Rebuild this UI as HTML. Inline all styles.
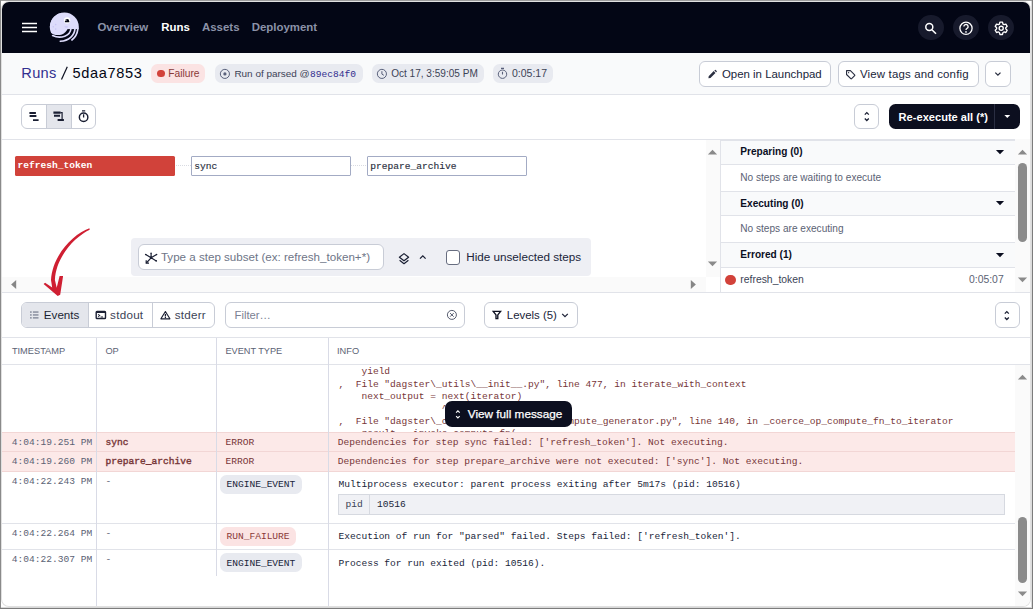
<!DOCTYPE html>
<html>
<head>
<meta charset="utf-8">
<title>Run 5daa7853</title>
<style>
*{box-sizing:border-box;margin:0;padding:0}
html,body{width:1033px;height:609px;overflow:hidden;background:#fff}
body{font-family:"Liberation Sans",sans-serif;position:relative}
.t{position:absolute;white-space:pre;line-height:1;font-family:"Liberation Sans",sans-serif}
.m{font-family:"Liberation Mono",monospace}
#frame{position:absolute;left:0;top:0;width:1033px;height:609px;background:#fff}
#app{position:absolute;left:2px;top:2px;width:1028px;height:604px;border-radius:7px;overflow:hidden;background:#fff;box-shadow:0 0 0 1px #e0e0e0}
#pg{position:absolute;left:-2px;top:-2px;width:1033px;height:609px}
</style>
</head>
<body>
<div id="frame">
<div style="position:absolute;left:0;top:0;width:1033px;height:1px;background:#9c9c9c"></div>
<div style="position:absolute;left:0;top:0;width:1px;height:609px;background:#8a8a8a"></div>
<div style="position:absolute;left:1032px;top:0;width:1px;height:609px;background:#7c7c7c"></div>
<div style="position:absolute;left:1031px;top:1px;width:1px;height:607px;background:#dcdcdc"></div>
<div style="position:absolute;left:0;top:608px;width:1033px;height:1px;background:#7c7c7c"></div>
<div style="position:absolute;left:1px;top:607px;width:1031px;height:1px;background:#d8d8d8"></div>
</div>
<div id="app"><div id="pg">
<div style="position:absolute;left:0px;top:0px;width:1033.00px;height:53.00px;background:#030615"></div>
<svg style="position:absolute;left:20px;top:20px;" width="20" height="16" viewBox="0 0 20 16"><path d="M2 3.55h15M2 7.55h15M2 11.6h15" stroke="#fff" stroke-width="1.5" fill="none"/></svg>
<svg style="position:absolute;left:44px;top:6px" width="48" height="42" viewBox="0 0 48 42">
<defs><clipPath id="oc"><circle cx="20.35" cy="21.05" r="14.5"/></clipPath></defs>
<g clip-path="url(#oc)">
<rect x="0" y="0" width="48" height="23.1" fill="#dddcfb"/>
<circle cx="13.8" cy="18.2" r="10.9" fill="#dddcfb"/>
</g>
<g fill="none" stroke="#dddcfb" stroke-width="1.65" stroke-linecap="round">
<path d="M26.9 22.8 C26.5 29.5 17 33.5 8.6 29.6"/>
<path d="M31 22.8 C30.3 29.5 25 34.6 16.3 35.3"/>
<path d="M33.9 22.8 Q33 30 27.9 34"/>
</g>
<circle cx="23.1" cy="14.4" r="3.15" fill="#fff"/>
<path d="M21 16.3 L21 15.2 A2.1 2.1 0 0 1 25.2 15.2 L25.2 16.3 Z" fill="#030615"/>
<circle cx="21.9" cy="14.2" r="0.6" fill="#fff"/>
<circle cx="11.7" cy="18.6" r="0.8" fill="#c9c6f6"/><circle cx="9.3" cy="20.7" r="0.8" fill="#c9c6f6"/><circle cx="11.7" cy="23.1" r="0.8" fill="#c9c6f6"/>
<ellipse cx="22.2" cy="20.8" rx="1.9" ry="1.1" fill="#cfcdf8"/>
</svg>
<div class="t" style="left:97.40px;top:22px;font-size:11.45px;color:#8b92a8;font-weight:bold;">Overview</div>
<div class="t" style="left:161.30px;top:22px;font-size:11.45px;color:#fff;font-weight:bold;">Runs</div>
<div class="t" style="left:202.00px;top:22px;font-size:11.45px;color:#8b92a8;font-weight:bold;">Assets</div>
<div class="t" style="left:251.70px;top:22px;font-size:11.45px;color:#8b92a8;font-weight:bold;">Deployment</div>
<div style="position:absolute;left:918.1px;top:14.6px;width:25.80px;height:25.80px;border-radius:50%;background:#171a2c"></div>
<div style="position:absolute;left:953.2px;top:14.6px;width:25.80px;height:25.80px;border-radius:50%;background:#171a2c"></div>
<div style="position:absolute;left:988.3000000000001px;top:14.6px;width:25.80px;height:25.80px;border-radius:50%;background:#171a2c"></div>
<svg style="position:absolute;left:921px;top:17.5px;" width="20" height="20" viewBox="0 0 20 20"><circle cx="8.3" cy="9.1" r="3.5" fill="none" stroke="#fff" stroke-width="1.5"/><path d="M10.9 11.7 L15 15.7" stroke="#fff" stroke-width="1.6" stroke-linecap="butt"/></svg>
<svg style="position:absolute;left:956px;top:17.5px;" width="20" height="20" viewBox="0 0 20 20"><circle cx="10" cy="10.3" r="6.1" fill="none" stroke="#fff" stroke-width="1.3"/><path d="M7.9 8.6 a2.1 2.1 0 1 1 3.3 1.7 c-.8 .55 -1.2 .9 -1.2 1.8" fill="none" stroke="#fff" stroke-width="1.35"/><circle cx="10" cy="13.9" r=".85" fill="#fff"/></svg>
<svg style="position:absolute;left:991px;top:17.5px;" width="20" height="20" viewBox="0 0 20 20"><path d="M8.89,4.14 L11.51,4.14 L11.99,6.06 L12.97,6.63 L14.88,6.08 L16.19,8.36 L14.76,9.73 L14.76,10.87 L16.19,12.24 L14.88,14.52 L12.97,13.97 L11.99,14.54 L11.51,16.46 L8.89,16.46 L8.41,14.54 L7.43,13.97 L5.52,14.52 L4.21,12.24 L5.64,10.87 L5.64,9.73 L4.21,8.36 L5.52,6.08 L7.43,6.63 L8.41,6.06Z" fill="none" stroke="#fff" stroke-width="1.35" stroke-linejoin="round"/><circle cx="10.2" cy="10.3" r="2.05" fill="none" stroke="#fff" stroke-width="1.35"/></svg>
<div style="position:absolute;left:0px;top:53px;width:1033.00px;height:41.00px;background:#f9fafb"></div>
<div style="position:absolute;left:0px;top:94px;width:1033.00px;height:1.00px;background:#e1e3e9"></div>
<div class="t" style="left:21.30px;top:66px;font-size:14.6px;color:#322f90;letter-spacing:0.33px;">Runs</div>
<svg style="position:absolute;left:59px;top:64px;" width="12" height="18" viewBox="0 0 12 18"><path d="M2.5 15.4 L8.3 2.7" stroke="#0b0e1f" stroke-width="1.2"/></svg>
<div class="t" style="left:72.50px;top:66px;font-size:14.6px;color:#030615;letter-spacing:0.64px;">5daa7853</div>
<div style="position:absolute;left:151px;top:64px;width:54.00px;height:19.00px;border-radius:6.5px;background:#fbe3e3"></div>
<div style="position:absolute;left:157.2px;top:69.8px;width:7.60px;height:7.60px;border-radius:50%;background:#d2423a"></div>
<div class="t" style="left:168.20px;top:69px;font-size:10.25px;color:#8a3a38;">Failure</div>
<div style="position:absolute;left:215px;top:64px;width:148.00px;height:19.00px;border-radius:6.5px;background:#e8eaf0"></div>
<svg style="position:absolute;left:218.5px;top:67.5px;" width="12" height="12" viewBox="0 0 12 12"><circle cx="5.9" cy="5.9" r="4.55" fill="none" stroke="#59607a" stroke-width="1"/><circle cx="5.9" cy="5.9" r="1.6" fill="#59607a"/></svg>
<div class="t" style="left:234.40px;top:69px;font-size:9.95px;color:#3c4356;">Run of parsed @</div>
<div class="t m" style="left:310.10px;top:70px;font-size:9.58px;color:#302d8e;">89ec84f0</div>
<div style="position:absolute;left:372px;top:64px;width:112.00px;height:19.00px;border-radius:6.5px;background:#e8eaf0"></div>
<svg style="position:absolute;left:375.5px;top:67.5px;" width="12" height="12" viewBox="0 0 12 12"><circle cx="5.9" cy="5.9" r="4.55" fill="none" stroke="#59607a" stroke-width="1"/><path d="M5.9 3.2v2.9l2 1.2" fill="none" stroke="#59607a" stroke-width="1"/></svg>
<div class="t" style="left:391.20px;top:69px;font-size:10.05px;color:#3c4356;">Oct 17, 3:59:05 PM</div>
<div style="position:absolute;left:493px;top:64px;width:60.00px;height:19.00px;border-radius:6.5px;background:#e8eaf0"></div>
<svg style="position:absolute;left:497px;top:67px;" width="11" height="13" viewBox="0 0 11 13"><circle cx="5.5" cy="7.2" r="4.2" fill="none" stroke="#59607a" stroke-width="1"/><path d="M4 1.4h3M5.5 4.8v2.6" fill="none" stroke="#59607a" stroke-width="1.1"/></svg>
<div class="t" style="left:512.00px;top:68px;font-size:10.5px;color:#3c4356;">0:05:17</div>
<div style="position:absolute;left:699px;top:61px;width:132.00px;height:26.00px;border:1px solid #c8ccd6;border-radius:6px;background:#fff"></div>
<svg style="position:absolute;left:706.6px;top:69.2px;" width="10.6" height="10.6" viewBox="0 0 12 12"><path d="M1.6 10.4 L1.9 8.1 L7.6 2.4 L9.6 4.4 L3.9 10.1 Z M8.3 1.7 l.7-.7 a.6 .6 0 0 1 .85 0 l1.15 1.15 a.6 .6 0 0 1 0 .85 l-.7 .7z" fill="#2b3042"/></svg>
<div class="t" style="left:721.90px;top:69px;font-size:11.45px;color:#20253a;">Open in Launchpad</div>
<div style="position:absolute;left:838px;top:61px;width:140.50px;height:26.00px;border:1px solid #c8ccd6;border-radius:6px;background:#fff"></div>
<svg style="position:absolute;left:844.8px;top:68.8px;" width="11.2" height="11.2" viewBox="0 0 13 13"><path d="M1.8 1.9 h4.5 l4.9 4.9 a.7 .7 0 0 1 0 1 l-3.5 3.5 a.7 .7 0 0 1 -1 0 L1.8 6.4 Z" fill="none" stroke="#2b3042" stroke-width="1.3" stroke-linejoin="round"/><circle cx="4.2" cy="4.3" r=".75" fill="#2b3042"/></svg>
<div class="t" style="left:860.00px;top:69px;font-size:11.45px;color:#20253a;letter-spacing:0.17px;">View tags and config</div>
<div style="position:absolute;left:985px;top:61px;width:26.00px;height:26.00px;border:1px solid #c8ccd6;border-radius:6px;background:#fff"></div>
<svg style="position:absolute;left:993px;top:70px;" width="10" height="8" viewBox="0 0 10 8"><path d="M2.3 2.6 L4.9 5.2 L7.5 2.6" fill="none" stroke="#2b3042" stroke-width="1.3"/></svg>
<div style="position:absolute;left:0px;top:95px;width:1033.00px;height:44.00px;background:#fff"></div>
<div style="position:absolute;left:0px;top:139px;width:1015.00px;height:1.00px;background:#e1e3e9"></div>
<div style="position:absolute;left:21px;top:104px;width:74.50px;height:25.00px;border:1px solid #c8ccd6;border-radius:6px;background:#fff;overflow:hidden"><div style="position:absolute;left:24px;top:0;width:25.5px;height:24px;background:#e4e6ec;border-left:1px solid #c8ccd6;border-right:1px solid #c8ccd6"></div></div>
<svg style="position:absolute;left:28px;top:110px;" width="12" height="13" viewBox="0 0 12 13"><path d="M1.4 2h6.5v1.9H1.4z M1.6 5.1h6.8v2H1.6z M5 9.2h5.6v1.9H5z" fill="#1a1f33"/></svg>
<svg style="position:absolute;left:52px;top:110px;" width="13" height="13" viewBox="0 0 13 13"><path d="M1.4 1.6h7.2v2.1H1.4z M2 4.7h6v2.1H2z M5.6 9h6.3v2H5.6z" fill="#1a1f33"/><path d="M8.4 2.7h1.7v6.6" fill="none" stroke="#1a1f33" stroke-width="1.2"/></svg>
<svg style="position:absolute;left:77px;top:109px;" width="13" height="15" viewBox="0 0 13 15"><circle cx="6.6" cy="8.2" r="4.25" fill="none" stroke="#1a1f33" stroke-width="1.45"/><path d="M5 1.9h3.2" stroke="#1a1f33" stroke-width="1.4"/><path d="M6.6 5.3v3.1" stroke="#1a1f33" stroke-width="1.3"/></svg>
<div style="position:absolute;left:854px;top:104px;width:24.50px;height:25.00px;border:1px solid #c8ccd6;border-radius:6px;background:#fff"></div>
<svg style="position:absolute;left:861.6px;top:109px;" width="10" height="15" viewBox="0 0 10 15"><path d="M2.8 5.6 L4.8 3.6 L6.8 5.6 M2.8 9.5 L4.8 11.5 L6.8 9.5" fill="none" stroke="#1a1f33" stroke-width="1.3"/></svg>
<div style="position:absolute;left:889px;top:104px;width:131.30px;height:25.00px;border-radius:6.5px;background:#0c0f1f"></div>
<div style="position:absolute;left:994.3px;top:104px;width:0.80px;height:25.00px;background:#2a2e42"></div>
<div class="t" style="left:898.60px;top:112px;font-size:11.1px;color:#fff;font-weight:bold;">Re-execute all (*)</div>
<svg style="position:absolute;left:1003px;top:114px;" width="9" height="5" viewBox="0 0 9 5"><path d="M1.4 1h5.8L4.3 4z" fill="#fff"/></svg>
<div style="position:absolute;left:15px;top:156px;width:160.20px;height:19.60px;background:#d1423a;border-radius:1.5px"></div>
<div class="t m" style="left:17.60px;top:161px;font-size:9.58px;color:#fff;font-weight:bold;">refresh_token</div>
<div style="position:absolute;left:191px;top:156px;width:160.00px;height:19.60px;border:1px solid #a3abc4;background:#fff;border-radius:1px"></div>
<div class="t m" style="left:194.20px;top:162px;font-size:9.58px;color:#2a2f40;-webkit-text-stroke:.15px #2a2f40;">sync</div>
<div style="position:absolute;left:367px;top:156px;width:159.80px;height:19.60px;border:1px solid #a3abc4;background:#fff;border-radius:1px"></div>
<div class="t m" style="left:370.20px;top:162px;font-size:9.58px;color:#2a2f40;-webkit-text-stroke:.15px #2a2f40;">prepare_archive</div>
<div style="position:absolute;left:175.5px;top:165px;width:15.50px;height:1.00px;background:repeating-linear-gradient(90deg,#d9dbe2 0 1px,transparent 1px 2px)"></div>
<div style="position:absolute;left:351.3px;top:165px;width:15.70px;height:1.00px;background:repeating-linear-gradient(90deg,#d9dbe2 0 1px,transparent 1px 2px)"></div>
<div style="position:absolute;left:131px;top:238px;width:460.00px;height:37.50px;background:#eeeff4;border-radius:4px"></div>
<div style="position:absolute;left:138.4px;top:244px;width:245.40px;height:26.00px;border:1px solid #c8ccd6;border-radius:6px;background:#fff"></div>
<svg style="position:absolute;left:143.5px;top:251.5px;" width="14" height="13" viewBox="0 0 14 13"><g stroke="#1a1f33" stroke-width="1.2" fill="none"><path d="M7.1 5.8V1.2 M7.1 5.8 L1.7 2.5 M7.1 5.8 L12.6 2.5 M7.1 5.8 L12.3 8.9 M7.1 5.8 L2.3 11"/><path d="M2.2 8.3v2.8h2.8"/></g><circle cx="7.1" cy="5.8" r="1.2" fill="#1a1f33"/><g fill="#1a1f33"><circle cx="7.1" cy="1.2" r=".8"/><circle cx="1.7" cy="2.5" r=".8"/><circle cx="12.6" cy="2.5" r=".8"/><circle cx="12.3" cy="8.9" r=".8"/></g></svg>
<div class="t" style="left:160.90px;top:251px;font-size:11.6px;color:#6e7587;">Type a step subset (ex: refresh_token+*)</div>
<svg style="position:absolute;left:397.5px;top:251.5px;" width="12" height="13" viewBox="0 0 12 13"><path d="M6 1.6 L10.6 5.2 L6 8.8 L1.4 5.2 Z" fill="none" stroke="#1a1f33" stroke-width="1.2" stroke-linejoin="round"/><path d="M1.6 8.3 L6 11.7 L10.4 8.3" fill="none" stroke="#1a1f33" stroke-width="1.2" stroke-linejoin="round"/></svg>
<svg style="position:absolute;left:418px;top:253px;" width="10" height="8" viewBox="0 0 10 8"><path d="M2 5.6 L4.8 2.8 L7.6 5.6" fill="none" stroke="#1a1f33" stroke-width="1.3"/></svg>
<div style="position:absolute;left:445.6px;top:250.3px;width:14.60px;height:14.50px;border:1.4px solid #676d80;border-radius:3px;background:#fff"></div>
<div class="t" style="left:466.20px;top:251px;font-size:11.7px;color:#20253a;">Hide unselected steps</div>
<div style="position:absolute;left:0px;top:277px;width:706.00px;height:15.00px;background:#fafafa"></div>
<svg style="position:absolute;left:10px;top:279px;" width="8" height="11" viewBox="0 0 8 11"><path d="M6.2 .9v9.2L1.1 5.5z" fill="#868686"/></svg>
<svg style="position:absolute;left:689px;top:279px;" width="8" height="11" viewBox="0 0 8 11"><path d="M1.8 .9v9.2L6.9 5.5z" fill="#868686"/></svg>
<div style="position:absolute;left:705.5px;top:140px;width:15.00px;height:137.00px;background:#fafafa"></div>
<svg style="position:absolute;left:707px;top:148px;" width="11" height="8" viewBox="0 0 11 8"><path d="M.9 6.4h9.2L5.5 1.7z" fill="#8a8a8a"/></svg>
<svg style="position:absolute;left:707px;top:260px;" width="11" height="8" viewBox="0 0 11 8"><path d="M.9 1.5h9.2L5.5 6.2z" fill="#8a8a8a"/></svg>
<div style="position:absolute;left:0px;top:292px;width:1033.00px;height:1.00px;background:#e1e3e9"></div>
<div style="position:absolute;left:720px;top:140px;width:1.00px;height:152.00px;background:#e1e3e9"></div>
<div style="position:absolute;left:721px;top:140px;width:294.00px;height:24.30px;background:#f9fafb"></div>
<div style="position:absolute;left:721px;top:140px;width:294.00px;height:1.00px;background:#e1e3e9"></div>
<div style="position:absolute;left:721px;top:163.8px;width:294.00px;height:1.00px;background:#e1e3e9"></div>
<div class="t" style="left:740.30px;top:147px;font-size:10.1px;color:#0b0e1f;font-weight:bold;">Preparing (0)</div>
<svg style="position:absolute;left:995px;top:149.25px;" width="10" height="6" viewBox="0 0 10 6"><path d="M.9 1h8.2L5 5.2z" fill="#0b0e1f"/></svg>
<div class="t" style="left:740.30px;top:173px;font-size:10.1px;color:#5b6274;">No steps are waiting to execute</div>
<div style="position:absolute;left:721px;top:191px;width:294.00px;height:24.70px;background:#f9fafb"></div>
<div style="position:absolute;left:721px;top:191px;width:294.00px;height:1.00px;background:#e1e3e9"></div>
<div style="position:absolute;left:721px;top:215.2px;width:294.00px;height:1.00px;background:#e1e3e9"></div>
<div class="t" style="left:740.30px;top:199px;font-size:10.1px;color:#0b0e1f;font-weight:bold;">Executing (0)</div>
<svg style="position:absolute;left:995px;top:200.45px;" width="10" height="6" viewBox="0 0 10 6"><path d="M.9 1h8.2L5 5.2z" fill="#0b0e1f"/></svg>
<div class="t" style="left:740.30px;top:224px;font-size:10.1px;color:#5b6274;">No steps are executing</div>
<div style="position:absolute;left:721px;top:242px;width:294.00px;height:25.50px;background:#f9fafb"></div>
<div style="position:absolute;left:721px;top:242px;width:294.00px;height:1.00px;background:#e1e3e9"></div>
<div style="position:absolute;left:721px;top:267.0px;width:294.00px;height:1.00px;background:#e1e3e9"></div>
<div class="t" style="left:740.30px;top:250px;font-size:10.1px;color:#0b0e1f;font-weight:bold;">Errored (1)</div>
<svg style="position:absolute;left:995px;top:251.85px;" width="10" height="6" viewBox="0 0 10 6"><path d="M.9 1h8.2L5 5.2z" fill="#0b0e1f"/></svg>
<div style="position:absolute;left:725.4px;top:274.8px;width:10.20px;height:10.20px;border-radius:50%;background:#d2423a"></div>
<div class="t" style="left:740.30px;top:275px;font-size:10.4px;color:#3c4356;">refresh_token</div>
<div class="t" style="left:969.00px;top:275px;font-size:10.4px;color:#5b6274;">0:05:07</div>
<div style="position:absolute;left:1015px;top:139px;width:16.00px;height:153.00px;background:#fafafa"></div>
<svg style="position:absolute;left:1017px;top:148px;" width="11" height="8" viewBox="0 0 11 8"><path d="M.9 6.4h9.2L5.5 1.7z" fill="#8a8a8a"/></svg>
<svg style="position:absolute;left:1017px;top:276px;" width="11" height="8" viewBox="0 0 11 8"><path d="M.9 1.5h9.2L5.5 6.2z" fill="#8a8a8a"/></svg>
<div style="position:absolute;left:1018px;top:163px;width:9.20px;height:79.30px;border-radius:4.6px;background:#8b8b8b"></div>
<svg style="position:absolute;left:0;top:0" width="1033" height="609" viewBox="0 0 1033 609"><path d="M89.4 228.3 C73.2 234.2 52.5 254.9 51 280 L52.2 287.4 L45.1 282.7 L43.6 284.1 L57.7 295.9 L60.2 294.8 L63.1 275.9 L59.6 275.9 L56.7 287.8 L54.9 280 C56 256.4 75.2 236.6 89.7 229.8 Z" fill="#cf1f32"/></svg>
<div style="position:absolute;left:21px;top:302px;width:194.00px;height:26.00px;border:1px solid #c8ccd6;border-radius:6px;background:#fff;overflow:hidden"><div style="position:absolute;left:-1px;top:-1px;width:68px;height:27px;background:#e4e6ec;border-right:1px solid #c8ccd6"></div><div style="position:absolute;left:130px;top:-1px;width:1px;height:27px;background:#c8ccd6"></div></div>
<svg style="position:absolute;left:29px;top:310px;" width="11" height="10" viewBox="0 0 11 10"><g fill="#8a90a0"><rect x="1" y="1.3" width="1.7" height="1.5"/><rect x="1" y="4.2" width="1.7" height="1.5"/><rect x="1" y="7.1" width="1.7" height="1.5"/><rect x="3.9" y="1.3" width="5.6" height="1.5"/><rect x="3.9" y="4.2" width="5.6" height="1.5"/><rect x="3.9" y="7.1" width="5.6" height="1.5"/></g></svg>
<div class="t" style="left:43.80px;top:309px;font-size:11.65px;color:#1a1f33;">Events</div>
<svg style="position:absolute;left:94.5px;top:310px;" width="12" height="10" viewBox="0 0 12 10"><rect x="1.2" y="1.5" width="9.3" height="7" rx=".8" fill="none" stroke="#1a1f33" stroke-width="1.4"/><rect x="1.2" y="1.5" width="9.3" height="1.5" fill="#1a1f33"/><path d="M3.1 4.3 L4.7 5.5 L3.1 6.7 M5.6 6.9h2.4" fill="none" stroke="#1a1f33" stroke-width="1.05"/></svg>
<div class="t" style="left:110.10px;top:309px;font-size:11.65px;color:#3c4356;letter-spacing:0.26px;">stdout</div>
<svg style="position:absolute;left:159.5px;top:310px;" width="11" height="10" viewBox="0 0 11 10"><path d="M5.4 1.5 L9.9 8.8 H.9 Z" fill="none" stroke="#1a1f33" stroke-width="1.15" stroke-linejoin="round"/><path d="M5.4 3.9v2.6" stroke="#1a1f33" stroke-width="1.3"/><circle cx="5.4" cy="7.5" r=".7" fill="#1a1f33"/></svg>
<div class="t" style="left:174.80px;top:309px;font-size:11.65px;color:#3c4356;letter-spacing:0.22px;">stderr</div>
<div style="position:absolute;left:225.3px;top:302px;width:239.70px;height:26.00px;border:1px solid #c8ccd6;border-radius:6px;background:#fff"></div>
<div class="t" style="left:234.50px;top:310px;font-size:11.3px;color:#7b8193;">Filter…</div>
<svg style="position:absolute;left:446px;top:309px;" width="12" height="12" viewBox="0 0 12 12"><circle cx="5.9" cy="5.9" r="4.5" fill="none" stroke="#555b6e" stroke-width="1"/><path d="M4.1 4.1 L7.7 7.7 M7.7 4.1 L4.1 7.7" stroke="#555b6e" stroke-width="1"/></svg>
<div style="position:absolute;left:484px;top:302px;width:94.00px;height:26.00px;border:1px solid #c8ccd6;border-radius:6px;background:#fff"></div>
<svg style="position:absolute;left:492px;top:310px;" width="10" height="10" viewBox="0 0 10 10"><path d="M1.2 1.4 H8.6 L5.8 4.9 V8.6 H4 V4.9 Z" fill="none" stroke="#0b0e1f" stroke-width="1.35" stroke-linejoin="miter"/></svg>
<div class="t" style="left:506.80px;top:310px;font-size:11.4px;color:#20253a;">Levels (5)</div>
<svg style="position:absolute;left:560px;top:311px;" width="10" height="8" viewBox="0 0 10 8"><path d="M2.2 2.9 L5 5.7 L7.8 2.9" fill="none" stroke="#20253a" stroke-width="1.3"/></svg>
<div style="position:absolute;left:995px;top:302px;width:24.50px;height:26.00px;border:1px solid #c8ccd6;border-radius:6px;background:#fff"></div>
<svg style="position:absolute;left:1002.3px;top:307.6px;" width="10" height="15" viewBox="0 0 10 15"><path d="M2.8 5.6 L4.8 3.6 L6.8 5.6 M2.8 9.5 L4.8 11.5 L6.8 9.5" fill="none" stroke="#1a1f33" stroke-width="1.3"/></svg>
<div style="position:absolute;left:0px;top:337px;width:1033.00px;height:1.00px;background:#e1e3e9"></div>
<div class="t" style="left:11.90px;top:347px;font-size:9.25px;color:#5b6274;">TIMESTAMP</div>
<div class="t" style="left:105.40px;top:347px;font-size:9.25px;color:#5b6274;">OP</div>
<div class="t" style="left:225.40px;top:347px;font-size:9.2px;color:#5b6274;">EVENT TYPE</div>
<div class="t" style="left:337.00px;top:347px;font-size:9.25px;color:#5b6274;">INFO</div>
<div style="position:absolute;left:0px;top:364px;width:1033.00px;height:1.00px;background:#e1e3e9"></div>
<div style="position:absolute;left:0;top:365px;width:1015px;height:67.5px;overflow:hidden">
<div class="t m" style="left:338.40px;top:2px;font-size:9.58px;color:#773638;">    yield</div>
<div class="t m" style="left:338.40px;top:15px;font-size:9.58px;color:#773638;">,  File "dagster\_utils\__init__.py", line 477, in iterate_with_context</div>
<div class="t m" style="left:338.40px;top:27px;font-size:9.58px;color:#773638;">    next_output = next(iterator)</div>
<div class="t m" style="left:338.40px;top:39px;font-size:9.58px;color:#773638;">                  ^^^^^^^^^^^^^^</div>
<div class="t m" style="left:338.40px;top:52px;font-size:9.58px;color:#773638;">,  File "dagster\_core\execution\plan\compute_generator.py", line 140, in _coerce_op_compute_fn_to_iterator</div>
<div class="t m" style="left:338.40px;top:64px;font-size:9.58px;color:#773638;">    result = invoke_compute_fn(</div>
</div>
<div style="position:absolute;left:0px;top:432.5px;width:1015.00px;height:38.50px;background:#fce9e8"></div>
<div style="position:absolute;left:0px;top:432px;width:1015.00px;height:1.00px;background:#f2d6d5"></div>
<div style="position:absolute;left:0px;top:451px;width:1015.00px;height:1.00px;background:#f2d6d5"></div>
<div style="position:absolute;left:0px;top:470.6px;width:1015.00px;height:1.00px;background:#f2d6d5"></div>
<div class="t m" style="left:11.80px;top:438px;font-size:9.58px;color:#5b6274;">4:04:19.251 PM</div>
<div class="t m" style="left:105.60px;top:438px;font-size:9.58px;color:#773638;-webkit-text-stroke:.38px #773638;">sync</div>
<div class="t m" style="left:225.60px;top:438px;font-size:9.58px;color:#773638;">ERROR</div>
<div class="t m" style="left:337.70px;top:438px;font-size:9.58px;color:#773638;">Dependencies for step sync failed: ['refresh_token']. Not executing.</div>
<div class="t m" style="left:11.80px;top:457px;font-size:9.58px;color:#5b6274;">4:04:19.260 PM</div>
<div class="t m" style="left:105.60px;top:457px;font-size:9.58px;color:#773638;-webkit-text-stroke:.38px #773638;">prepare_archive</div>
<div class="t m" style="left:225.60px;top:457px;font-size:9.58px;color:#773638;">ERROR</div>
<div class="t m" style="left:337.70px;top:457px;font-size:9.58px;color:#773638;">Dependencies for step prepare_archive were not executed: ['sync']. Not executing.</div>
<div class="t m" style="left:11.80px;top:477px;font-size:9.58px;color:#5b6274;">4:04:22.243 PM</div>
<div class="t m" style="left:105.60px;top:477px;font-size:9.58px;color:#5b6274;">-</div>
<div style="position:absolute;left:220.1px;top:475.4px;width:81.60px;height:18.60px;border-radius:6.5px;background:#e8eaf0"></div>
<div class="t m" style="left:226.40px;top:480px;font-size:9.58px;color:#20253a;">ENGINE_EVENT</div>
<div class="t m" style="left:338.40px;top:480px;font-size:9.58px;color:#20253a;">Multiprocess executor: parent process exiting after 5m17s (pid: 10516)</div>
<div style="position:absolute;left:338px;top:494.2px;width:666.80px;height:20.40px;background:#f0f1f5;border:1px solid #d6d9e0"></div>
<div style="position:absolute;left:369.3px;top:494.2px;width:1.00px;height:20.40px;background:#d6d9e0"></div>
<div class="t m" style="left:345.60px;top:500px;font-size:9.58px;color:#3c4356;">pid</div>
<div class="t m" style="left:377.00px;top:500px;font-size:9.58px;color:#20253a;">10516</div>
<div style="position:absolute;left:0px;top:523.3px;width:1015.00px;height:1.00px;background:#e1e3e9"></div>
<div class="t m" style="left:11.80px;top:529px;font-size:9.58px;color:#5b6274;">4:04:22.264 PM</div>
<div class="t m" style="left:105.60px;top:529px;font-size:9.58px;color:#5b6274;">-</div>
<div style="position:absolute;left:220.1px;top:527.2px;width:75.90px;height:18.80px;border-radius:6.5px;background:#fbe3e3"></div>
<div class="t m" style="left:226.40px;top:532px;font-size:9.58px;color:#8a3a38;">RUN_FAILURE</div>
<div class="t m" style="left:338.40px;top:532px;font-size:9.58px;color:#20253a;">Execution of run for "parsed" failed. Steps failed: ['refresh_token'].</div>
<div style="position:absolute;left:0px;top:549.3px;width:1015.00px;height:1.00px;background:#e1e3e9"></div>
<div class="t m" style="left:11.80px;top:555px;font-size:9.58px;color:#5b6274;">4:04:22.307 PM</div>
<div class="t m" style="left:105.60px;top:555px;font-size:9.58px;color:#5b6274;">-</div>
<div style="position:absolute;left:220.1px;top:553.3px;width:81.60px;height:19.00px;border-radius:6.5px;background:#e8eaf0"></div>
<div class="t m" style="left:226.40px;top:559px;font-size:9.58px;color:#20253a;">ENGINE_EVENT</div>
<div class="t m" style="left:338.40px;top:559px;font-size:9.58px;color:#20253a;">Process for run exited (pid: 10516).</div>
<div style="position:absolute;left:96px;top:338px;width:1.00px;height:269.00px;background:#d9dbe6"></div>
<div style="position:absolute;left:216px;top:338px;width:1.00px;height:237.50px;background:#d9dbe6"></div>
<div style="position:absolute;left:328.3px;top:338px;width:1.00px;height:269.00px;background:#d9dbe6"></div>
<div style="position:absolute;left:445px;top:401px;width:126.70px;height:26.00px;border-radius:7px;background:#0c0f1f"></div>
<svg style="position:absolute;left:453px;top:406.5px;" width="10" height="15" viewBox="0 0 10 15"><path d="M3.1 5.7 L4.9 3.9 L6.7 5.7 M3.1 9.1 L4.9 10.9 L6.7 9.1" fill="none" stroke="#fff" stroke-width="1.15"/></svg>
<div class="t" style="left:467.80px;top:408px;font-size:11.75px;color:#fff;-webkit-text-stroke:.25px #fff;">View full message</div>
<div style="position:absolute;left:1015px;top:365px;width:16.00px;height:242.00px;background:#fafafa"></div>
<svg style="position:absolute;left:1017px;top:373px;" width="11" height="8" viewBox="0 0 11 8"><path d="M.9 6.4h9.2L5.5 1.7z" fill="#8a8a8a"/></svg>
<svg style="position:absolute;left:1017px;top:590px;" width="11" height="8" viewBox="0 0 11 8"><path d="M.9 1.5h9.2L5.5 6.2z" fill="#8a8a8a"/></svg>
<div style="position:absolute;left:1018px;top:517px;width:9.30px;height:66.00px;border-radius:4.6px;background:#8b8b8b"></div>
</div></div>
</body>
</html>
